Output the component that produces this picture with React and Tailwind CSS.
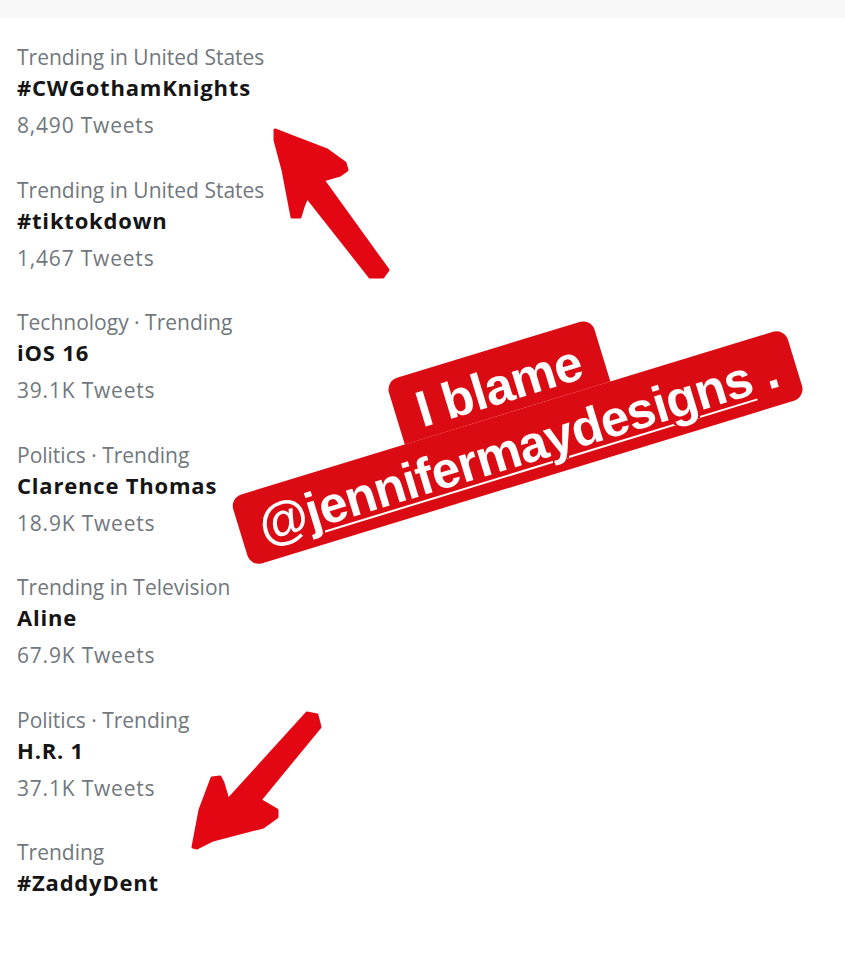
import React from "react";

const items = [
  { cat: "Trending in United States", title: "#CWGothamKnights", count: "8,490 Tweets" },
  { cat: "Trending in United States", title: "#tiktokdown", count: "1,467 Tweets" },
  { cat: "Technology · Trending", title: "iOS 16", count: "39.1K Tweets" },
  { cat: "Politics · Trending", title: "Clarence Thomas", count: "18.9K Tweets" },
  { cat: "Trending in Television", title: "Aline", count: "67.9K Tweets" },
  { cat: "Politics · Trending", title: "H.R. 1", count: "37.1K Tweets" },
  { cat: "Trending", title: "#ZaddyDent", count: null },
];

export default function App() {
  return (
    <div className="relative w-[845px] h-[953px] bg-white overflow-hidden" style={{ fontFamily: '"Open Sans", "Liberation Sans", sans-serif' }}>
      <div className="h-[18px] bg-[#f8f8f8]" />
      <div className="flex flex-col gap-[34.5px] pt-[24px] pl-[17px]">
        {items.map((it, i) => (
          <div key={i} className="flex flex-col">
            <div className="text-[21px] leading-[30px] text-[#71777c]">{it.cat}</div>
            <div className="text-[22px] leading-[30px] font-bold text-[#151515] tracking-[0.8px]">{it.title}</div>
            {it.count && (
              <div className="mt-2 text-[21px] leading-[30px] text-[#71777c] tracking-[0.8px]">{it.count}</div>
            )}
          </div>
        ))}
      </div>

      <svg className="absolute inset-0 pointer-events-none" width="845" height="953" viewBox="0 0 845 953">
        <polygon
          fill="#e30613"
          stroke="#e30613"
          strokeWidth="3"
          strokeLinejoin="round"
          points="275,130 293,137 327,150 345,163 347,170 340,175 323,180 388,270 383,277 370,277 307,197 303,207 300,217 292,217 283,170 275,140"
        />
        <polygon
          fill="#e30613"
          stroke="#e30613"
          strokeWidth="3"
          strokeLinejoin="round"
          points="193,847 200,810 212,778 220,777 223,783 228,800 307,713 317,715 320,727 260,800 277,810 277,817 263,827 213,840 197,848"
        />
      </svg>

      <div
        className="absolute left-[218px] top-[347px] w-[580px] h-[138px] flex flex-col items-center -rotate-[17deg]"
        style={{ fontFamily: '"Liberation Sans", Arial, sans-serif' }}
      >
        <div className="w-[215px] h-[66px] bg-[#db0b13] rounded-t-[12px] flex items-center justify-center text-white font-bold text-[51px] leading-none tracking-[-0.8px] pt-[8px]">
          I blame
        </div>
        <div className="w-[580px] h-[72px] bg-[#db0b13] rounded-[12px] flex items-center justify-center text-white font-bold text-[51px] leading-none tracking-[-0.8px]">
          <span>@</span>
          <span className="underline decoration-2 underline-offset-[5px]">jennifermaydesigns</span>
          <span>&nbsp;.</span>
        </div>
      </div>
    </div>
  );
}
